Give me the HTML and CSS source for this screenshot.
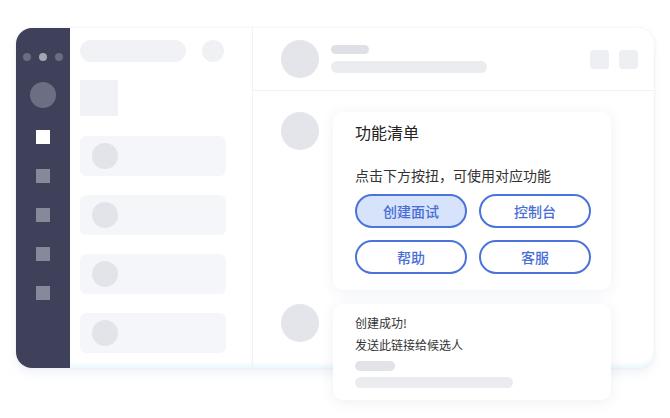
FILE: index.html
```html
<!DOCTYPE html>
<html lang="zh-CN">
<head>
    <meta charset="UTF-8">
    <meta name="viewport" content="width=device-width, initial-scale=1.0">
    <title>功能清单</title>
    <link rel="stylesheet" href="styles.css">
</head>
<body>
    <div class="window">
        <div class="sidebar">
            <div class="dots">
                <span class="dot"></span>
                <span class="dot dot-light"></span>
                <span class="dot"></span>
            </div>
            <div class="side-avatar"></div>
            <div class="side-icons">
                <span class="side-icon active"></span>
                <span class="side-icon"></span>
                <span class="side-icon"></span>
                <span class="side-icon"></span>
                <span class="side-icon"></span>
            </div>
        </div>

        <div class="list">
            <div class="search-row">
                <div class="search"></div>
                <div class="search-btn"></div>
            </div>
            <div class="list-thumb"></div>
            <div class="list-item"><span class="list-avatar"></span></div>
            <div class="list-item"><span class="list-avatar"></span></div>
            <div class="list-item"><span class="list-avatar"></span></div>
            <div class="list-item"><span class="list-avatar"></span></div>
        </div>

        <div class="chat">
            <div class="chat-header">
                <div class="avatar"></div>
                <div class="header-lines">
                    <span class="line line-short"></span>
                    <span class="line line-long"></span>
                </div>
                <div class="header-actions">
                    <span class="action"></span>
                    <span class="action"></span>
                </div>
            </div>

            <div class="chat-body">
                <div class="message">
                    <div class="avatar"></div>
                    <div class="card">
                        <h3 class="card-title">功能清单</h3>
                        <p class="card-text">点击下方按扭，可使用对应功能</p>
                        <div class="btn-grid">
                            <button class="pill-btn selected">创建面试</button>
                            <button class="pill-btn">控制台</button>
                            <button class="pill-btn">帮助</button>
                            <button class="pill-btn">客服</button>
                        </div>
                    </div>
                </div>

                <div class="message">
                    <div class="avatar"></div>
                    <div class="card card-small">
                        <p class="small-text">创建成功!</p>
                        <p class="small-text">发送此链接给候选人</p>
                        <span class="line link-short"></span>
                        <span class="line link-long"></span>
                    </div>
                </div>
            </div>
        </div>
    </div>
</body>
</html>
```

FILE: styles.css
```css
html, body {
    height: 100%;
}

body {
    margin: 0;
    background-color: #ffffff;
    font-family: "Noto Sans CJK SC", "Noto Sans", sans-serif;
    padding-top: 28px;
    box-sizing: border-box;
}

.window {
    display: flex;
    width: 638px;
    height: 340px;
    margin-left: 16px;
    border-radius: 16px;
    background-color: #ffffff;
    box-shadow: 0 6px 10px rgba(215, 222, 236, 0.35), 0 0 3px rgba(225, 228, 236, 0.6);
}

/* dark left bar */
.sidebar {
    width: 54px;
    flex-shrink: 0;
    background-color: #3e4159;
    border-radius: 16px 0 0 16px;
    display: flex;
    flex-direction: column;
    align-items: center;
}

.dots {
    display: flex;
    gap: 8px;
    margin-top: 25px;
}

.dot {
    width: 8px;
    height: 8px;
    border-radius: 50%;
    background-color: #6a6d82;
}

.dot-light {
    background-color: #a3a5b3;
}

.side-avatar {
    width: 26px;
    height: 26px;
    border-radius: 50%;
    background-color: #6c6f83;
    margin-top: 21px;
}

.side-icons {
    display: flex;
    flex-direction: column;
    gap: 25px;
    margin-top: 22px;
}

.side-icon {
    width: 14px;
    height: 14px;
    background-color: #868999;
}

.side-icon.active {
    background-color: #ffffff;
}

/* conversation list */
.list {
    width: 183px;
    flex-shrink: 0;
    border-right: 1px solid #f1f2f5;
    padding: 12px 0 0 10px;
    box-sizing: border-box;
    box-shadow: inset 0 -5px 4px -2px #e9f8fc;
}

.search-row {
    display: flex;
    align-items: center;
    gap: 16px;
}

.search {
    width: 106px;
    height: 22px;
    border-radius: 11px;
    background-color: #f1f2f5;
}

.search-btn {
    width: 22px;
    height: 22px;
    border-radius: 50%;
    background-color: #f0f1f4;
}

.list-thumb {
    width: 38px;
    height: 36px;
    background-color: #f1f2f5;
    margin: 18px 0 20px;
}

.list-item {
    width: 146px;
    height: 40px;
    border-radius: 6px;
    background-color: #f5f6f9;
    display: flex;
    align-items: center;
    padding-left: 12px;
    box-sizing: border-box;
    margin-bottom: 19px;
}

.list-avatar {
    width: 26px;
    height: 26px;
    border-radius: 50%;
    background-color: #e2e4ea;
}

/* chat area */
.chat {
    flex: 1;
    display: flex;
    flex-direction: column;
    box-shadow: inset 0 -5px 4px -2px #e9f8fc;
    border-radius: 0 16px 16px 0;
}

.chat-header {
    height: 62px;
    flex-shrink: 0;
    border-bottom: 1px solid #f1f2f5;
    display: flex;
    align-items: center;
    padding: 0 16px 0 28px;
}

.avatar {
    width: 38px;
    height: 38px;
    border-radius: 50%;
    background-color: #e3e5eb;
    flex-shrink: 0;
}

.header-lines {
    display: flex;
    flex-direction: column;
    gap: 7px;
    margin-left: 12px;
    flex: 1;
}

.line {
    display: block;
    border-radius: 6px;
}

.line-short {
    width: 38px;
    height: 9px;
    background-color: #dfe0e5;
}

.line-long {
    width: 156px;
    height: 12px;
    background-color: #ebecf0;
}

.header-actions {
    display: flex;
    gap: 10px;
}

.action {
    width: 19px;
    height: 19px;
    border-radius: 4px;
    background-color: #eeeff2;
}

.chat-body {
    padding: 21px 0 0 28px;
}

.message {
    display: flex;
    gap: 14px;
    margin-bottom: 14px;
}

.card {
    width: 278px;
    flex-shrink: 0;
    background-color: #ffffff;
    border-radius: 10px;
    box-shadow: 0 2px 14px rgba(40, 60, 110, 0.08);
    padding: 9px 22px 16px;
    box-sizing: border-box;
    position: relative;
    z-index: 1;
}

.card-title {
    margin: 0;
    font-size: 16px;
    font-weight: normal;
    color: #222222;
    line-height: 22px;
}

.card-text {
    margin: 22px 0 9px;
    font-size: 14px;
    color: #333333;
    line-height: 20px;
}

.btn-grid {
    display: grid;
    grid-template-columns: 112px 112px;
    column-gap: 12px;
    row-gap: 12px;
}

.pill-btn {
    height: 34px;
    border: 2px solid #4a73dc;
    border-radius: 17px;
    background-color: #ffffff;
    color: #476ed6;
    font-family: "Noto Sans CJK SC", sans-serif;
    font-size: 14px;
    font-weight: 500;
    padding: 0;
}

.pill-btn.selected {
    background-color: #d7e2fb;
}

.card-small {
    height: 96px;
    padding: 10px 22px;
}

.small-text {
    margin: 0 0 5px;
    font-size: 12px;
    line-height: 17px;
    color: #333333;
}

.link-short {
    width: 40px;
    height: 10px;
    background-color: #e2e3e6;
    margin-top: 8px;
}

.link-long {
    width: 158px;
    height: 11px;
    background-color: #ebecef;
    margin-top: 6px;
}
```
